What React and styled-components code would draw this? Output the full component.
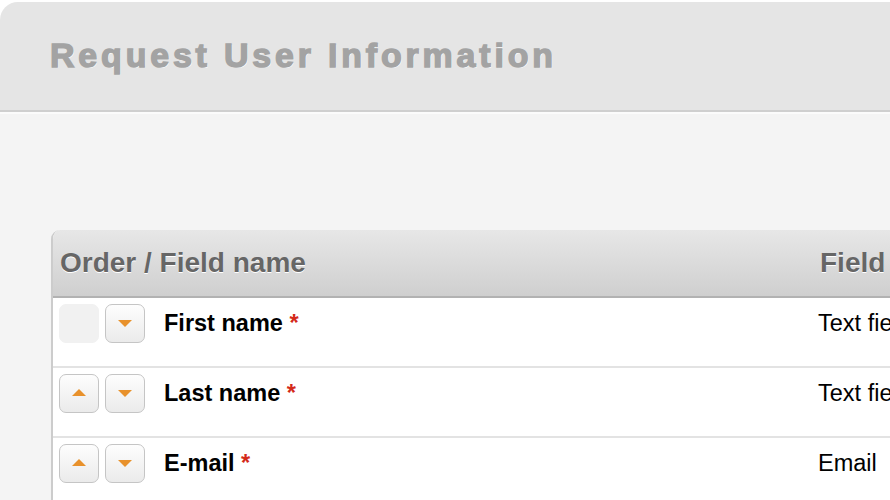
import styled, { createGlobalStyle } from "styled-components";

const GlobalStyle = createGlobalStyle`
  html, body {
    margin: 0;
    padding: 0;
    background: #ffffff;
    overflow: hidden;
    font-family: "Liberation Sans", Arial, sans-serif;
  }
`;

const Page = styled.div`
  width: 890px;
  height: 500px;
  padding-top: 2px;
  box-sizing: border-box;
  display: flex;
  flex-direction: column;
  overflow: hidden;
`;

const TitleBar = styled.div`
  flex-shrink: 0;
  height: 110px;
  box-sizing: border-box;
  background: #e5e5e5;
  border-top-left-radius: 18px;
  border-bottom: 2px solid #cfcfcf;
  padding: 36px 0 0 50px;
`;

const Title = styled.h1`
  margin: 0;
  font-size: 34px;
  line-height: 34px;
  font-weight: bold;
  letter-spacing: 3.8px;
  color: #a3a3a3;
  -webkit-text-stroke: 1.4px #a3a3a3;
  text-shadow: 1px 1px 0 #ffffff;
  white-space: nowrap;
`;

const Content = styled.div`
  flex-shrink: 0;
  background: #f4f4f4;
  border-top: 2px solid #fbfbfb;
  padding: 116px 0 0 51px;
`;

const Table = styled.div`
  width: 1000px;
  border-left: 2px solid #cccccc;
  border-top-left-radius: 9px;
  overflow: hidden;
  background: #ffffff;
`;

const Row = styled.div`
  display: grid;
  grid-template-columns: 765px 1fr;
  box-sizing: border-box;
`;

const HeadRow = styled(Row)`
  height: 68px;
  align-items: center;
  background: linear-gradient(#e7e7e7, #cfcfcf);
  border-bottom: 2px solid #b2b2b2;
`;

const HeadCell = styled.div`
  padding-left: ${({ $pad }) => $pad}px;
  font-size: 28px;
  font-weight: bold;
  color: #666666;
  text-shadow: 0 1px 0 #ffffff;
  white-space: nowrap;
`;

const BodyRow = styled(Row)`
  height: 70px;
  padding-top: 6px;
  border-bottom: 2px solid #e3e3e3;
`;

const NameCell = styled.div`
  display: flex;
  align-items: center;
  height: 39px;
  padding-left: 6px;
  gap: 6px;
`;

const TypeCell = styled.div`
  display: flex;
  align-items: center;
  height: 39px;
  font-size: 23.5px;
  color: #000000;
  white-space: nowrap;
`;

const OrderButton = styled.div`
  width: 40px;
  height: 39px;
  box-sizing: border-box;
  border-radius: 7px;
  display: flex;
  align-items: center;
  justify-content: center;
  padding-bottom: ${({ $dir }) => ($dir === "up" ? 3 : 1)}px;
  border: 1px solid ${({ $disabled }) => ($disabled ? "#f1f1f1" : "#c5c5c5")};
  background: ${({ $disabled }) =>
    $disabled ? "#f1f1f1" : "linear-gradient(#fdfdfd, #ebebeb)"};
`;

const Arrow = styled.span`
  width: 0;
  height: 0;
  border-left: 7px solid transparent;
  border-right: 7px solid transparent;
  ${({ $dir }) =>
    $dir === "up"
      ? "border-bottom: 7px solid #e8912b;"
      : "border-top: 7px solid #e8912b;"}
`;

const FieldName = styled.span`
  margin-left: 13px;
  font-size: 23.5px;
  font-weight: bold;
  color: #000000;
  white-space: nowrap;
`;

const Required = styled.span`
  color: #d42a1a;
`;

const fields = [
  { name: "First name", type: "Text field", first: true },
  { name: "Last name", type: "Text field" },
  { name: "E-mail", type: "Email" },
];

export default function App() {
  return (
    <>
      <GlobalStyle />
      <Page>
        <TitleBar>
          <Title>Request User Information</Title>
        </TitleBar>
        <Content>
          <Table>
            <HeadRow>
              <HeadCell $pad={7}>Order / Field name</HeadCell>
              <HeadCell $pad={2}>Field type</HeadCell>
            </HeadRow>
            {fields.map((f) => (
              <BodyRow key={f.name}>
                <NameCell>
                  <OrderButton $dir="up" $disabled={f.first}>
                    {!f.first && <Arrow $dir="up" />}
                  </OrderButton>
                  <OrderButton $dir="down">
                    <Arrow $dir="down" />
                  </OrderButton>
                  <FieldName>
                    {f.name} <Required>*</Required>
                  </FieldName>
                </NameCell>
                <TypeCell>{f.type}</TypeCell>
              </BodyRow>
            ))}
          </Table>
        </Content>
      </Page>
    </>
  );
}
